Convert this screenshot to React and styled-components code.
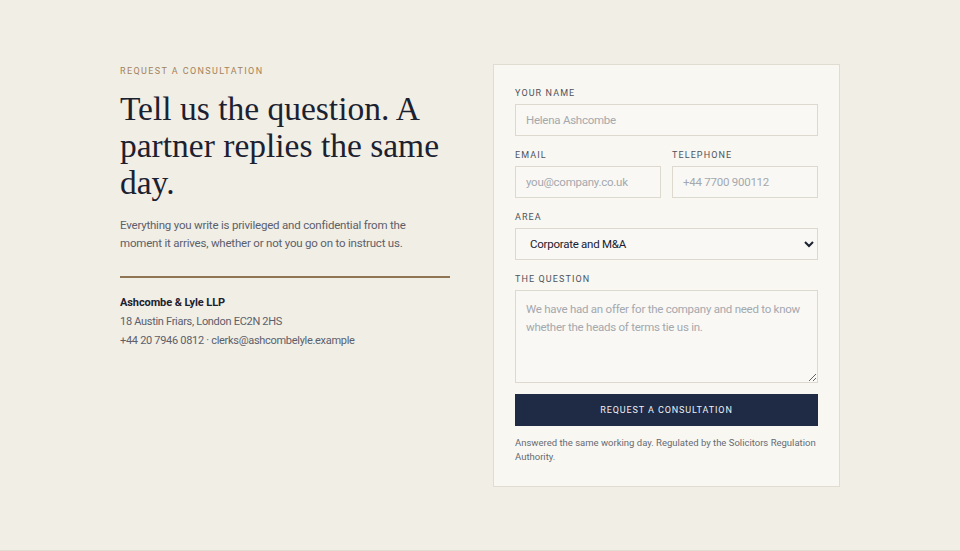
import React from "react";
import styled, { createGlobalStyle } from "styled-components";

const sans = `"Roboto", "Liberation Sans", sans-serif`;

const GlobalStyle = createGlobalStyle`
  html, body {
    margin: 0;
    padding: 0;
    background: #f1eee6;
  }
  body {
    font-family: ${sans};
    color: #1d2230;
  }
  * { box-sizing: border-box; }
`;

const Page = styled.section`
  min-height: 551px;
  padding: 64px 0 40px;
  border-bottom: 1px solid #e2ddd0;
`;

const Layout = styled.div`
  width: 720px;
  margin: 0 auto;
  display: grid;
  grid-template-columns: 330px 347px;
  justify-content: space-between;
  align-items: start;
`;

const Intro = styled.div`
  display: flex;
  flex-direction: column;
`;

const Eyebrow = styled.div`
  font-size: 9px;
  line-height: 14px;
  letter-spacing: 1.4px;
  text-transform: uppercase;
  color: #a3835a;
`;

const Heading = styled.h1`
  margin: 12px 0 0;
  font-family: "Liberation Serif", "DejaVu Serif", serif;
  font-weight: 400;
  font-size: 33.5px;
  line-height: 37px;
  color: #1c2130;
`;

const Lead = styled.p`
  margin: 15px 0 0;
  max-width: 300px;
  font-size: 11.5px;
  letter-spacing: -0.2px;
  line-height: 18px;
  color: #5c606a;
`;

const Rule = styled.hr`
  width: 100%;
  margin: 24px 0 0;
  border: 0;
  border-top: 2px solid #8f7553;
`;

const Firm = styled.div`
  margin-top: 15px;
  display: flex;
  flex-direction: column;
  font-size: 11px;
  letter-spacing: -0.3px;
  line-height: 19px;
  color: #5c606a;
`;

const FirmName = styled.strong`
  font-weight: 700;
  letter-spacing: -0.1px;
  color: #1c2130;
`;

const Card = styled.form`
  background: #f8f7f2;
  border: 1px solid #e0dcd1;
  padding: 22px 21px 22px;
  display: flex;
  flex-direction: column;
`;

const Row = styled.div`
  display: grid;
  grid-template-columns: 1fr 1fr;
  gap: 11px;
`;

const Field = styled.label`
  display: flex;
  flex-direction: column;
  margin-bottom: 13px;
`;

const Label = styled.span`
  font-size: 9px;
  line-height: 12px;
  letter-spacing: 1.1px;
  text-transform: uppercase;
  color: #4f535c;
  margin-bottom: 5px;
`;

const controlBase = `
  width: 100%;
  font-family: ${sans};
  font-size: 11.5px;
  letter-spacing: -0.25px;
  color: #1c2130;
  background: #f9f8f4;
  border: 1px solid #ddd9ce;
  border-radius: 0;
  outline: none;
  &::placeholder { color: #a4a8af; }
`;

const Input = styled.input`
  ${controlBase}
  height: 32px;
  padding: 0 10px;
`;

const Select = styled.select`
  ${controlBase}
  height: 32px;
  padding: 0 6px 0 10px;
`;

const TextArea = styled.textarea`
  ${controlBase}
  height: 93px;
  padding: 9px 10px;
  line-height: 18px;
  resize: vertical;
`;

const Submit = styled.button`
  height: 32px;
  margin-top: -2px;
  border: 0;
  background: #1f2a44;
  color: #eef0f4;
  font-family: ${sans};
  font-size: 9px;
  letter-spacing: 0.9px;
  text-transform: uppercase;
  cursor: pointer;
`;

const Note = styled.p`
  margin: 10px 0 0;
  font-size: 9.5px;
  line-height: 14px;
  color: #676b73;
`;

export default function App() {
  return (
    <Page>
      <GlobalStyle />
      <Layout>
        <Intro>
          <Eyebrow>Request a consultation</Eyebrow>
          <Heading>Tell us the question. A partner replies the same day.</Heading>
          <Lead>
            Everything you write is privileged and confidential from the moment it arrives,
            whether or not you go on to instruct us.
          </Lead>
          <Rule />
          <Firm>
            <FirmName>Ashcombe &amp; Lyle LLP</FirmName>
            <span>18 Austin Friars, London EC2N 2HS</span>
            <span>+44 20 7946 0812 · clerks@ashcombelyle.example</span>
          </Firm>
        </Intro>

        <Card onSubmit={(e) => e.preventDefault()}>
          <Field>
            <Label>Your name</Label>
            <Input placeholder="Helena Ashcombe" />
          </Field>
          <Row>
            <Field>
              <Label>Email</Label>
              <Input type="email" placeholder="you@company.co.uk" />
            </Field>
            <Field>
              <Label>Telephone</Label>
              <Input type="tel" placeholder="+44 7700 900112" />
            </Field>
          </Row>
          <Field>
            <Label>Area</Label>
            <Select defaultValue="corporate">
              <option value="corporate">Corporate and M&amp;A</option>
              <option value="disputes">Disputes</option>
              <option value="employment">Employment</option>
              <option value="property">Property</option>
            </Select>
          </Field>
          <Field>
            <Label>The question</Label>
            <TextArea placeholder="We have had an offer for the company and need to know whether the heads of terms tie us in." />
          </Field>
          <Submit type="submit">Request a consultation</Submit>
          <Note>
            Answered the same working day. Regulated by the Solicitors Regulation Authority.
          </Note>
        </Card>
      </Layout>
    </Page>
  );
}
